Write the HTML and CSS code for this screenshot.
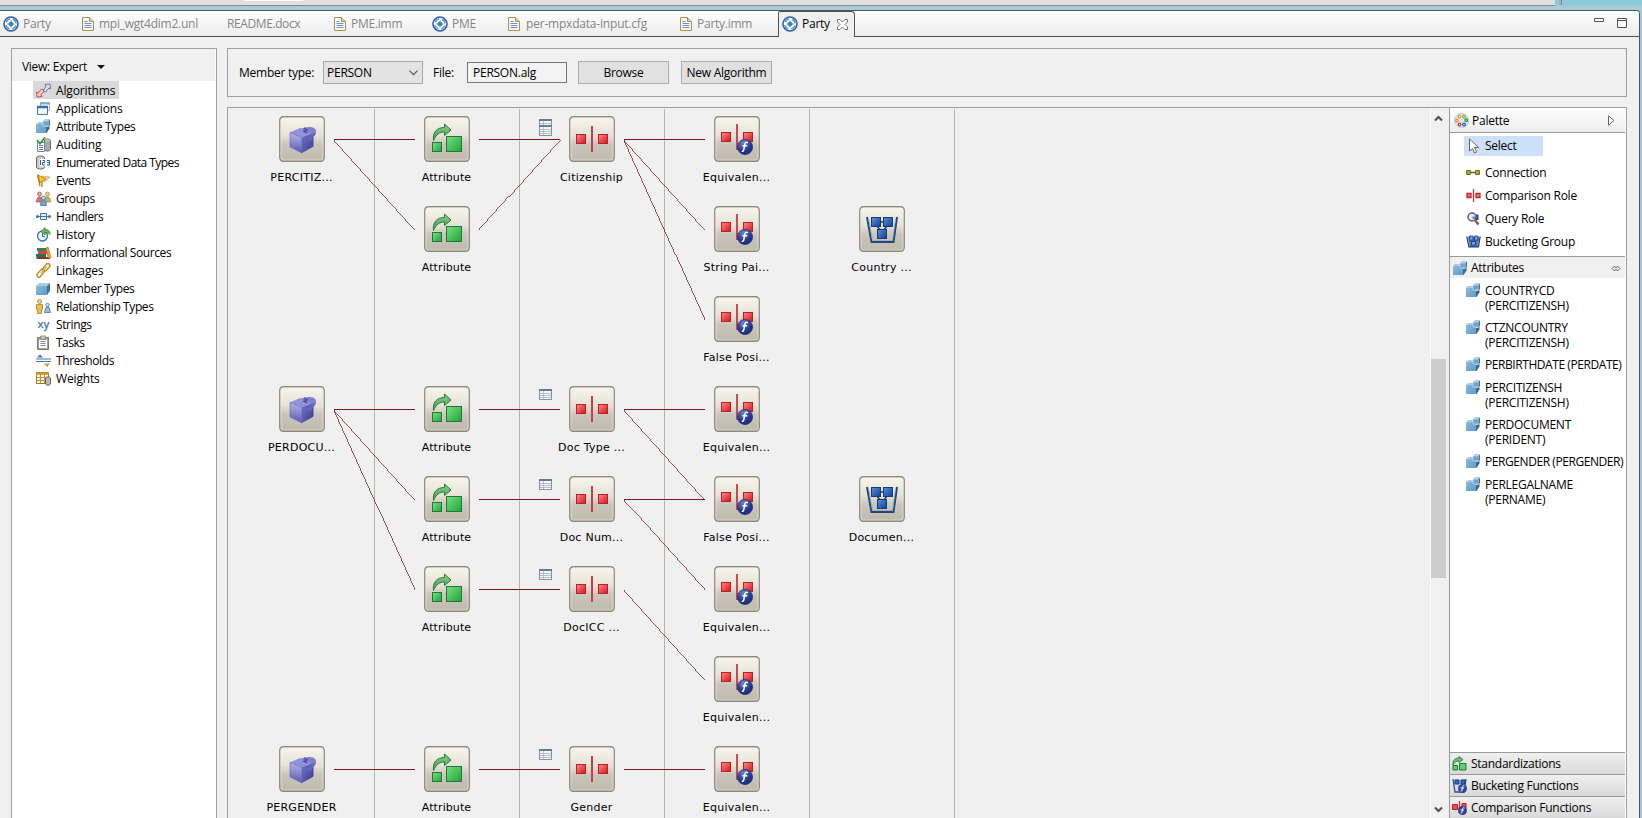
FILE: index.html
```html
<!DOCTYPE html>
<html lang="en">
<head>
<meta charset="utf-8">
<title>Party</title>
<link rel="stylesheet" href="styles.css">
</head>
<body>
<svg class="defs" width="0" height="0">
  <defs>
    <linearGradient id="gTile" x1="0" y1="0" x2="0" y2="1"><stop offset="0" stop-color="#f8f6ec"/><stop offset=".42" stop-color="#e6e2d8"/><stop offset=".62" stop-color="#cbc6bb"/><stop offset="1" stop-color="#bfbaae"/></linearGradient>
    <linearGradient id="gGreen" x1="0" y1="0" x2="1" y2="1"><stop offset="0" stop-color="#7ae082"/><stop offset="1" stop-color="#1fa23c"/></linearGradient>
    <linearGradient id="gArrow" x1="0" y1="0" x2="0" y2="1"><stop offset="0" stop-color="#8ccf90"/><stop offset="1" stop-color="#3b9a4c"/></linearGradient>
    <linearGradient id="gRed" x1="0" y1="0" x2="1" y2="1"><stop offset="0" stop-color="#ff8a8a"/><stop offset="1" stop-color="#d3141c"/></linearGradient>
    <linearGradient id="gBlue" x1="0" y1="0" x2="1" y2="1"><stop offset="0" stop-color="#5c90dc"/><stop offset="1" stop-color="#0c3f94"/></linearGradient>
    <linearGradient id="gCubeL" x1="0" y1="0" x2="0" y2="1"><stop offset="0" stop-color="#b4b7ea"/><stop offset="1" stop-color="#5a58b4"/></linearGradient>
    <linearGradient id="gCubeR" x1="0" y1="0" x2="1" y2="1"><stop offset="0" stop-color="#7273c8"/><stop offset="1" stop-color="#3a3a94"/></linearGradient>
    <radialGradient id="gBall" cx=".4" cy=".25" r=".8"><stop offset="0" stop-color="#7187d0"/><stop offset=".6" stop-color="#28398e"/><stop offset="1" stop-color="#1b2a70"/></radialGradient>
    <linearGradient id="gSide" x1="0" y1="0" x2="1" y2="1"><stop offset="0" stop-color="#8dbadb"/><stop offset="1" stop-color="#5c9cc8"/></linearGradient>
  </defs>
  <symbol id="tile" viewBox="0 0 46 46"><rect x=".75" y=".75" width="44.5" height="44.5" rx="3.5" fill="url(#gTile)" stroke="#8d897f" stroke-width="1.3"/><rect x="2" y="2" width="42" height="42" rx="2.500" fill="none" stroke="#f4f1e6" stroke-opacity=".5"/></symbol>
  <symbol id="member" viewBox="0 0 46 46"><use href="#tile"/>
    <path d="M11 16.500l12 5v15.500l-12-6z" fill="url(#gCubeL)"/><path d="M23 21.500l11.500-5v14L23 37z" fill="url(#gCubeR)"/><path d="M11 16.500l10-4.500 13.500 4.500-11.500 5z" fill="#9294da"/>
    <path d="M27 15c2-1 5 0 5 2 0 3-2 3-3 5v2.500l3 1 1.500-4c2.500-1.500 3.500-3.500 3.500-6z" fill="#6667bc"/>
    <path d="M22 13.500c1.500-1.800 4.500-2.500 8-2.500 4 0 7 1.500 7 4-1 2-3 3-5 2.500-1.500-2-4-1.500-5-2-2 0-3.500-1-5-2z" fill="#7f81d0"/><path d="M25 12l3 2-3 1.500 3.500 1.500" fill="none" stroke="#4243a0" stroke-width="1.200"/><path d="M11 16.500l12 5V37l-12-6zM23 21.500l5-2" fill="none" stroke="#6463b5" stroke-width=".6"/></symbol>
  <symbol id="attrGlyph" viewBox="0 0 46 46"><path d="M9.500 24.500c-1-8 3-13 11-13V8l6.500 6-6.500 5.500V16c-5 0-8.500 2.500-11 8.500z" fill="url(#gArrow)" stroke="#2a7a3c" stroke-linejoin="round"/><rect x="8.500" y="26.500" width="9" height="9" fill="url(#gGreen)" stroke="#1c7a32"/><rect x="22.500" y="20.500" width="15" height="15" fill="url(#gGreen)" stroke="#1c7a32"/></symbol>
  <symbol id="attr" viewBox="0 0 46 46"><use href="#tile"/><use href="#attrGlyph"/></symbol>
  <symbol id="role" viewBox="0 0 46 46"><use href="#tile"/><path d="M23 10v26" stroke="#b8343a" stroke-width="2"/><path d="M23 10v26" stroke="#e2555a" stroke-width=".7"/><rect x="7.500" y="18.500" width="9" height="9" fill="url(#gRed)" stroke="#bf1e24"/><rect x="29.500" y="18.500" width="9" height="9" fill="url(#gRed)" stroke="#bf1e24"/></symbol>
  <symbol id="func" viewBox="0 0 46 46"><use href="#tile"/><path d="M23 8v26" stroke="#c43c42" stroke-width="1.800"/><rect x="7.500" y="16.500" width="9" height="9" fill="url(#gRed)" stroke="#bf1e24"/><rect x="29.500" y="16.500" width="9" height="9" fill="url(#gRed)" stroke="#bf1e24"/><circle cx="31" cy="31" r="7.600" fill="url(#gBall)" stroke="#26357c" stroke-width=".8"/><path d="M34 26.600c-2.400-1-3 .5-3.400 3l-.8 4c-.3 1.600-1 2-2 1.500M28.500 29.700h4.700" fill="none" stroke="#fff" stroke-width="1.500"/></symbol>
  <symbol id="bucket" viewBox="0 0 46 46"><use href="#tile"/><path d="M8 11l4.500 25h22L38 11" fill="none" stroke="#274672" stroke-width="2"/><path d="M9.700 13l3.800 21.500h20l3-21.500" fill="none" stroke="#88aad2" stroke-width=".8"/><path d="M21 16h4M18 20l3 4M28 20l-3 4" stroke="#24375f" stroke-width="1.400"/><rect x="12.500" y="11.500" width="9" height="9" fill="url(#gBlue)" stroke="#173a7c"/><rect x="24.500" y="11.500" width="9" height="9" fill="url(#gBlue)" stroke="#173a7c"/><rect x="18.500" y="23.500" width="9" height="9" fill="url(#gBlue)" stroke="#173a7c"/></symbol>
  <symbol id="table" viewBox="0 0 13 11"><rect x=".5" y=".5" width="12" height="10" fill="#f7f9fc" stroke="#8293a8"/><path d="M0 1h13" stroke="#647b99" stroke-width="2"/><path d="M1 4.500h11M1 6.500h11M1 8.500h11" stroke="#9eafc3" stroke-width=".8"/><path d="M4.500 2v8" stroke="#9eafc3" stroke-width=".7"/></symbol>

  <symbol id="wheel" viewBox="0 0 16 16"><circle cx="8" cy="8" r="7" fill="#fff" stroke="#2b62a0" stroke-width="1.600"/><circle cx="8" cy="8" r="5.200" fill="none" stroke="#5d92c8" stroke-width="1.500" stroke-dasharray="5.170 3" stroke-dashoffset="-1.500"/><circle cx="8" cy="8" r="2.300" fill="#3f7cbc"/><path d="M8 4.500v7M4.500 8h7" stroke="#3f7cbc"/></symbol>
  <symbol id="doc" viewBox="0 0 12 14"><path d="M.5.500h7l4 4v9H.500z" fill="#fbfaf0" stroke="#a0935c"/><path d="M7.500.500v4h4" fill="#e2d28a" stroke="#a0935c"/><path d="M2.500 4.500h3M2.500 6.500h7M2.500 8.500h7M2.500 10.500h7" stroke="#6d92cd"/></symbol>
  <symbol id="cube" viewBox="0 0 15 15"><path d="M0 5l3-3h11l-3 3z" fill="#a9cce4"/><path d="M0 5h11v9H0z" fill="url(#gSide)"/><path d="M11 5l3-3v8l-3 4z" fill="#47709a"/></symbol>
  <symbol id="cubes" viewBox="0 0 15 15"><path d="M0 5l2-2h6v2z" fill="#a9cce4"/><path d="M0 5h10v9H0z" fill="url(#gSide)"/><path d="M10 8l3.500-1v2.500l-3 4.500H10z" fill="#45658d"/><path d="M7 2l2-2h5l-1.500 2z" fill="#a9cce4"/><path d="M7 2h5.500v5H7z" fill="#6da5cd" stroke="#d6e7f3" stroke-width=".6"/><path d="M12.500 2L14 .500V6l-1.500 1.500z" fill="#47709a"/></symbol>
</svg>

<div class="top-strip"><div class="top-grey"><span class="top-white"></span></div><span class="top-mark"></span></div>
<div class="window">
  <div class="tabs">
    <div class="tab t1"><svg width="16" height="16"><use href="#wheel"/></svg><span>Party</span></div>
    <div class="tab t2"><svg width="12" height="14"><use href="#doc"/></svg><span>mpi_wgt4dim2.unl</span></div>
    <div class="tab t3"><span>README.docx</span></div>
    <div class="tab t4"><svg width="12" height="14"><use href="#doc"/></svg><span>PME.imm</span></div>
    <div class="tab t5"><svg width="16" height="16"><use href="#wheel"/></svg><span>PME</span></div>
    <div class="tab t6"><svg width="12" height="14"><use href="#doc"/></svg><span>per-mpxdata-input.cfg</span></div>
    <div class="tab t7"><svg width="12" height="14"><use href="#doc"/></svg><span>Party.imm</span></div>
    <div class="tab active"><svg width="16" height="16"><use href="#wheel"/></svg><span>Party</span><svg class="close" width="11" height="11" viewBox="0 0 11 11"><path d="M.5.500h2.500l2.500 2.500L8 .500h2.500V3L8 5.500 10.500 8v2.500H8L5.500 8 3 10.500H.500V8L3 5.500.500 3z" fill="#fff" stroke="#666" stroke-width=".9"/></svg></div>
    <svg class="winbtn" width="34" height="12" viewBox="0 0 34 12"><path d="M.5 1.500h9v3h-9zM23.500 1.500h9v9h-9zM23.500 3.500h9" fill="#fff" stroke="#555"/></svg>
  </div>

  <div class="body">
    <aside class="side">
      <div class="view"><span>View: Expert</span><i class="caret"></i></div>
      <div class="tree">
        <div class="item sel"><svg viewBox="0 0 15 15"><path d="M1 14l-.5-5L2 10l3.500-4 2.500 1-.5 2L5 11.500l1 2z" fill="#f2c7c7" stroke="#b14848" stroke-width=".9"/><path d="M14 1l.5 5L13 5 9.500 9 7.500 8 8 6l2-2.500-1-2z" fill="#d5dbea" stroke="#5f708d" stroke-width=".9"/></svg><span>Algorithms</span></div>
        <div class="item"><svg viewBox="0 0 15 15"><path d="M4.500 1.500h9v8h-9z" fill="#fff" stroke="#a7b7c7"/><path d="M4 2.500h10" stroke="#8aa7cc" stroke-width="2"/><path d="M1.500 5.500h10v8h-10z" fill="#f3f8fd" stroke="#51749f"/><path d="M1 6h11" stroke="#2f6fbd" stroke-width="2.500"/></svg><span>Applications</span></div>
        <div class="item tight"><svg viewBox="0 0 15 15"><use href="#cubes"/></svg><span>Attribute Types</span></div>
        <div class="item"><svg viewBox="0 0 15 15"><ellipse cx="11.500" cy="3.500" rx="3" ry="1.500" fill="#eee" stroke="#777"/><path d="M8.500 3.500v9c1 2 5 2 6 0v-9" fill="#aaa" stroke="#666"/><path d="M1.500 5.500h7v9h-7z" fill="#fff" stroke="#6b86ad"/><path d="M3 8.500h4M3 10.500h4M3 12.500h4" stroke="#5f83bd"/><path d="M1 3l3 3.500L9 .500" fill="none" stroke="#2f9143" stroke-width="1.800"/></svg><span>Auditing</span></div>
        <div class="item tighter"><svg viewBox="0 0 15 15"><path d="M.5 2.500c1-2 7-2 8 0v10c-1 2-7 2-8 0z" fill="#ccc" stroke="#666"/><path d="M3.500 4h12v7.500h-12z" fill="#fff"/><path d="M4.500 5v5M6.500 5.500h2v2h-2v2.500h2.500M11 5.500h2.500v4.500H11M11 7.700h2" fill="none" stroke="#315b97"/></svg><span>Enumerated Data Types</span></div>
        <div class="item tight"><svg viewBox="0 0 15 15"><path d="M5 3l9 1-5 5z" fill="#e6d5b0" stroke="#b9a077" stroke-width=".7"/><path d="M2 2l8 4-6 4z" fill="#fbc52f" stroke="#c18113" stroke-width=".9"/><path d="M1.500 1.500L4 13M6 8v6" stroke="#b98122" stroke-width="1.300"/></svg><span>Events</span></div>
        <div class="item tight"><svg viewBox="0 0 15 15"><circle cx="3.500" cy="3" r="2" fill="#e7a6a0" stroke="#a54d4d" stroke-width=".7"/><path d="M.5 11c0-7 6-7 6 0z" fill="#d77777" stroke="#a54d4d" stroke-width=".7"/><circle cx="11.500" cy="3" r="2" fill="#e6d58d" stroke="#948035" stroke-width=".7"/><path d="M8.500 11c0-7 6-7 6 0z" fill="#c4b360" stroke="#948035" stroke-width=".7"/><circle cx="7.500" cy="7" r="2" fill="#b9d6ee" stroke="#3a679c" stroke-width=".7"/><path d="M4.500 14.500c0-7 6-7 6 0z" fill="#70a6d5" stroke="#3a679c" stroke-width=".7"/></svg><span>Groups</span></div>
        <div class="item tight"><svg viewBox="0 0 15 15"><path d="M0 7.500h15" stroke="#3e70aa"/><path d="M4.500 4.500h6v6h-6z" fill="#e6f0fa" stroke="#3e70aa"/><path d="M4 7.500h7" stroke="#3e70aa"/><circle cx="1.500" cy="7.500" r="1.500" fill="#3e70aa"/><circle cx="13.500" cy="7.500" r="1.500" fill="#3e70aa"/></svg><span>Handlers</span></div>
        <div class="item"><svg viewBox="0 0 15 15"><circle cx="6.500" cy="9" r="5" fill="#eaf5fd" stroke="#3774ad" stroke-width="1.300"/><path d="M6.500 6v3.500H9" fill="none" stroke="#3774ad"/><path d="M5 4.500L9 .500v2c4 0 5 2 5 5-1-2-3-2-5-2v2.500z" fill="#6dbb46" stroke="#2c792e" stroke-width=".8"/></svg><span>History</span></div>
        <div class="item tight"><svg viewBox="0 0 15 15"><path d="M1 3h9v3H1z" fill="#248571"/><path d="M2 6h9v3H2z" fill="#d84c25"/><path d="M0 9h10v3H0z" fill="#276d64"/><path d="M1 12h13v2H0z" fill="#7c3b22"/><path d="M10 3l2-1 3 11h-3z" fill="#f39a25" stroke="#b75c18" stroke-width=".6"/></svg><span>Informational Sources</span></div>
        <div class="item"><svg viewBox="0 0 15 15"><g fill="#fff7dc" stroke="#b88323" stroke-width="1.300"><rect x="-4" y="-2" width="8.500" height="4" rx="2" transform="translate(10.300 4.500) rotate(-50)"/><rect x="-4.500" y="-2" width="9" height="4" rx="2" transform="translate(4.500 10.300) rotate(-50)"/></g><path d="M5 10l5.500-6" stroke="#e0a93d" stroke-width="1.300"/></svg><span>Linkages</span></div>
        <div class="item tight"><svg viewBox="0 0 15 15"><use href="#cube"/></svg><span>Member Types</span></div>
        <div class="item tight"><svg viewBox="0 0 15 15"><circle cx="3.500" cy="2.500" r="2" fill="#f2d677" stroke="#a77e26" stroke-width=".8"/><path d="M.5 5.500h6v5H5.500v4h-4v-4h-1z" fill="#e9bf4d" stroke="#a77e26" stroke-width=".8"/><circle cx="11.500" cy="6" r="1.700" fill="#d7e4f2" stroke="#4c6f9e" stroke-width=".8"/><path d="M8.500 13.500l1.500-5h3l1.500 5z" fill="#9dbbdd" stroke="#4c6f9e" stroke-width=".8"/></svg><span>Relationship Types</span></div>
        <div class="item tight"><b class="xy">xy</b><span>Strings</span></div>
        <div class="item tighter"><svg viewBox="0 0 15 15"><path d="M1.500 2.500h11v12h-11z" fill="#a9a18f" stroke="#81796a"/><path d="M3 5h8v8H3z" fill="#fff"/><path d="M4.500 1h5v3h-5z" fill="#ccc" stroke="#777" stroke-width=".7"/><path d="M4.500 6.500h5M4.500 8.500h5M4.500 10.500h5" stroke="#6b87be"/></svg><span>Tasks</span></div>
        <div class="item tight"><svg viewBox="0 0 15 15"><path d="M0 6h15M0 8.500h15" stroke="#4473b8" stroke-width="1.200"/><path d="M1 4.500L4 1.500l3 3z" fill="#3c6dae"/><path d="M8 10.500l3 3.500 3-3.500z" fill="#b1a73a"/></svg><span>Thresholds</span></div>
        <div class="item"><svg viewBox="0 0 15 15"><path d="M.5 1.500h12v11H.500z" fill="#fff8df" stroke="#a87421"/><path d="M0 2.500h13" stroke="#d0902a" stroke-width="2.500"/><path d="M1 6.500h11M1 9.500h11M4.500 3v9M8.500 3v9" stroke="#bc9140"/><path d="M9.500 7c1-1.500 4-1.500 5 0v6c-1 1.500-4 1.500-5 0z" fill="#b8b8b8" stroke="#666"/></svg><span>Weights</span></div>
      </div>
    </aside>

    <main class="main">
      <div class="toolbar">
        <span class="lbl lbl-member">Member type:</span>
        <div class="select"><span>PERSON</span><svg width="9" height="6" viewBox="0 0 9 6"><path d="M.5.700l4 4 4-4" fill="none" stroke="#555" stroke-width="1.200"/></svg></div>
        <span class="lbl lbl-file">File:</span>
        <div class="input">PERSON.alg</div>
        <div class="button browse">Browse</div>
        <div class="button new">New Algorithm</div>
      </div>

      <div class="editor">
        <div class="canvas">
          <svg class="edges" width="1203" height="710" viewBox="228 108 1203 710">
            <path d="M374.500 109v709M519.500 109v709M664.500 109v709M809.500 109v709M954.500 109v709" stroke="#b9b5a2"/>
            <g fill="none" stroke="#74191d" shape-rendering="crispEdges">
              <path d="M334 139.500h81M334 409.500h81M334 769.500h81M479 139.500h81M479 409.500h81M479 499.500h81M479 589.500h81M479 769.500h81M624 139.500h81M624 409.500h81M624 499.500h81M624 769.500h81"/>
              <path stroke-width=".75" d="M334 139.500l81 90M334 409.500l81 90M334 409.500l81 180M479 229.500l81-90M624 139.500l81 90M624 139.500l81 180M624 409.500l81 90M624 499.500l81 90M624 589.500l81 90"/>
            </g>
            <use href="#table" x="539" y="119" width="13" height="11"/><use href="#table" x="539" y="125" width="13" height="11"/>
            <use href="#table" x="539" y="389" width="13" height="11"/><use href="#table" x="539" y="479" width="13" height="11"/><use href="#table" x="539" y="569" width="13" height="11"/><use href="#table" x="539" y="749" width="13" height="11"/>
          </svg>
          <div class="nodes">
            <div class="node c1 r1"><svg><use href="#member"/></svg><span>PERCITIZ...</span></div>
            <div class="node c2 r1"><svg><use href="#attr"/></svg><span>Attribute</span></div>
            <div class="node c3 r1"><svg><use href="#role"/></svg><span>Citizenship</span></div>
            <div class="node c4 r1"><svg><use href="#func"/></svg><span>Equivalen...</span></div>
            <div class="node c2 r2"><svg><use href="#attr"/></svg><span>Attribute</span></div>
            <div class="node c4 r2"><svg><use href="#func"/></svg><span>String Pai...</span></div>
            <div class="node c5 r2"><svg><use href="#bucket"/></svg><span>Country ...</span></div>
            <div class="node c4 r3"><svg><use href="#func"/></svg><span>False Posi...</span></div>
            <div class="node c1 r4"><svg><use href="#member"/></svg><span>PERDOCU...</span></div>
            <div class="node c2 r4"><svg><use href="#attr"/></svg><span>Attribute</span></div>
            <div class="node c3 r4"><svg><use href="#role"/></svg><span>Doc Type ...</span></div>
            <div class="node c4 r4"><svg><use href="#func"/></svg><span>Equivalen...</span></div>
            <div class="node c2 r5"><svg><use href="#attr"/></svg><span>Attribute</span></div>
            <div class="node c3 r5"><svg><use href="#role"/></svg><span>Doc Num...</span></div>
            <div class="node c4 r5"><svg><use href="#func"/></svg><span>False Posi...</span></div>
            <div class="node c5 r5"><svg><use href="#bucket"/></svg><span>Documen...</span></div>
            <div class="node c2 r6"><svg><use href="#attr"/></svg><span>Attribute</span></div>
            <div class="node c3 r6"><svg><use href="#role"/></svg><span>DocICC ...</span></div>
            <div class="node c4 r6"><svg><use href="#func"/></svg><span>Equivalen...</span></div>
            <div class="node c4 r7"><svg><use href="#func"/></svg><span>Equivalen...</span></div>
            <div class="node c1 r8"><svg><use href="#member"/></svg><span>PERGENDER</span></div>
            <div class="node c2 r8"><svg><use href="#attr"/></svg><span>Attribute</span></div>
            <div class="node c3 r8"><svg><use href="#role"/></svg><span>Gender</span></div>
            <div class="node c4 r8"><svg><use href="#func"/></svg><span>Equivalen...</span></div>
          </div>
        </div>
        <div class="scroll">
          <svg width="9" height="7" viewBox="0 0 9 7"><path d="M1 5.500L4.500 2 8 5.500" fill="none" stroke="#505050" stroke-width="2"/></svg>
          <div class="thumb"></div>
          <svg class="down" width="9" height="7" viewBox="0 0 9 7"><path d="M1 1.500L4.500 5 8 1.500" fill="none" stroke="#505050" stroke-width="2"/></svg>
        </div>
        <div class="palette">
          <div class="pal-head"><svg width="15" height="15" viewBox="0 0 15 15"><circle cx="7.500" cy="7.500" r="7" fill="#dfe7f6" stroke="#b9c5de"/><g fill="#fff" stroke-width="1.300"><circle cx="5.500" cy="3.500" r="1.300" stroke="#e0a030"/><circle cx="10" cy="3.500" r="1.300" stroke="#8cb52d"/><circle cx="12.200" cy="7.200" r="1.300" stroke="#29912d"/><circle cx="10" cy="11.500" r="1.300" stroke="#2850b8"/><circle cx="5.500" cy="11.500" r="1.300" stroke="#c13b3b"/><circle cx="3" cy="7.500" r="1.300" stroke="#ef8c1c"/></g></svg><span>Palette</span><svg class="tri" width="7" height="11" viewBox="0 0 7 11"><path d="M.5.800v9.400l5.500-4.700z" fill="#fff" stroke="#666"/></svg></div>
          <div class="tools">
            <div class="tool on"><svg width="15" height="16" viewBox="0 0 15 16"><path d="M3.500 1v12l3-2.500 2 4.500 2-1-2-4.500h4z" fill="#fff" stroke="#6b675e"/></svg><span>Select</span></div>
            <div class="tool"><svg width="15" height="15" viewBox="0 0 15 15"><path d="M4 7.500h7" stroke="#66661e" stroke-width="1.500"/><path d="M.5 5.500h4v4h-4zM9.500 5.500h4v4h-4z" fill="#a9a943" stroke="#6f6f26"/></svg><span>Connection</span></div>
            <div class="tool"><svg width="15" height="15" viewBox="0 0 15 15"><path d="M7.500 1v13" stroke="#c8333a" stroke-width="1.300"/><path d="M1 5.500h4v4H1zM10 5.500h4v4h-4z" fill="#f57d7d" stroke="#c02229" stroke-width="1.300"/></svg><span>Comparison Role</span></div>
            <div class="tool"><svg width="15" height="15" viewBox="0 0 15 15"><path d="M8.500 8.500l4 5" stroke="#8d5a50" stroke-width="2.500"/><path d="M7 3.500h5.500v5.500H7z" fill="#38488a"/><circle cx="6" cy="6" r="4" fill="#e4eaf6" stroke="#54608c" stroke-width="1.500"/><path d="M6.500 5.500H9v2.500H6.500z" fill="#6d7cb4"/></svg><span>Query Role</span></div>
            <div class="tool"><svg width="15" height="15" viewBox="5 7 36 32"><path d="M10 12l4 24h19l4-24z" fill="#557ab4"/><path d="M7 11l5 25h23l4-25" fill="none" stroke="#233c72" stroke-width="3"/><path d="M13 10h9v10h-9zM25 10h9v10h-9zM18 23h10v9H18z" fill="#6f9be0" stroke="#173a7c" stroke-width="2"/></svg><span>Bucketing Group</span></div>
          </div>
          <div class="attr-head"><svg width="15" height="15"><use href="#cubes"/></svg><span>Attributes</span><svg class="pin" width="10" height="7" viewBox="0 0 10 7"><path d="M3.500 1L1 3.500 3.500 6M6.500 1L9 3.500 6.500 6M3 1.500q2 2 4 0M3 5.500q2-2 4 0" fill="none" stroke="#666"/></svg></div>
          <div class="attrs">
            <div class="entry"><svg><use href="#cubes"/></svg><span>COUNTRYCD<br>(PERCITIZENSH)</span></div>
            <div class="entry"><svg><use href="#cubes"/></svg><span>CTZNCOUNTRY<br>(PERCITIZENSH)</span></div>
            <div class="entry long"><svg><use href="#cubes"/></svg><span>PERBIRTHDATE (PERDATE)</span></div>
            <div class="entry"><svg><use href="#cubes"/></svg><span>PERCITIZENSH<br>(PERCITIZENSH)</span></div>
            <div class="entry"><svg><use href="#cubes"/></svg><span>PERDOCUMENT<br>(PERIDENT)</span></div>
            <div class="entry long"><svg><use href="#cubes"/></svg><span>PERGENDER (PERGENDER)</span></div>
            <div class="entry"><svg><use href="#cubes"/></svg><span>PERLEGALNAME<br>(PERNAME)</span></div>
          </div>
          <div class="drawer"><svg width="16" height="16" viewBox="0 0 16 16"><path d="M1 9C.5 4 3 2 7 2V.500l4 3-4 3V5C4 5 2.500 6 1 9z" fill="#6fbf77" stroke="#2a7a3c" stroke-width=".9"/><path d="M1 9.500h4.500V14H1zM7.500 7.500H14V14H7.500z" fill="#63d06c" stroke="#1c7a32"/></svg><span>Standardizations</span></div>
          <div class="drawer"><svg width="16" height="16" viewBox="0 0 16 16"><path d="M1 1l2 13h9l2-13" fill="#cfdef4" stroke="#2b4f93" stroke-width="1.300"/><path d="M3 2h4v4H3zM9 2h4v4H9z" fill="#3767b8" stroke="#173a7c"/><circle cx="10.500" cy="10.500" r="4.500" fill="#2f489f"/><path d="M12.500 8c-2-1-2 1-2.300 3s-.5 2.500-1.500 2M8.500 10h3.500" fill="none" stroke="#fff"/></svg><span>Bucketing Functions</span></div>
          <div class="drawer last"><svg width="16" height="16" viewBox="0 0 16 16"><path d="M7.500 1v12" stroke="#c8333a" stroke-width="1.300"/><path d="M.5 4.500h5v5h-5zM10 3.500h4v4h-4z" fill="#ef4c4c" stroke="#b91d24"/><circle cx="10.500" cy="10.500" r="4.500" fill="#2f3f94"/><path d="M12.500 8c-2-1-2 1-2.300 3s-.5 2.500-1.500 2M8.500 10h3.500" fill="none" stroke="#fff"/></svg><span>Comparison Functions</span></div>
        </div>
      </div>
    </main>
  </div>
</div>
</body>
</html>
```
FILE: styles.css
```css
* { box-sizing: border-box; }
html, body { margin: 0; height: 818px; overflow: hidden; }
body {
  width: 1642px;
  background: #9ccbd8;
  color: #000;
  font: 12px/16px "Open Sans", "Noto Sans", sans-serif;
  letter-spacing: -0.25px;
  white-space: nowrap;
  display: flex;
  flex-direction: column;
}
svg { display: block; flex: none; }
.defs { position: absolute; }

.top-strip { height: 10px; flex: none; display: flex; background: linear-gradient(#8ccbd8 0 5px, #a9ccda 6px); }
.top-grey { width: 1555px; height: 6px; background: #e1dfe0; border-bottom: 1px solid #8a8a8c; display: flex; padding-left: 244px; }
.top-white { width: 59px; height: 1px; background: #fff; }
.top-mark { margin-left: 4px; width: 3px; height: 5px; background: #a8aed0; border-right: 1px solid #6e83ab; }

.window { width: 1640px; flex: 1; min-height: 0; display: flex; flex-direction: column; background: #f0f0f0; border: solid #4d5357; border-width: 1px 1px 0 0; border-radius: 0 4px 0 0; }
.tabs { height: 26px; flex: none; display: flex; align-items: center; background: linear-gradient(#fff, #ececec); border-bottom: 1px solid #4d5357; border-radius: 0 3px 0 0; color: #858585; }
.tab { display: flex; align-items: center; height: 26px; gap: 5px; flex: none; }
.t1 { width: 79px; padding-left: 3px; gap: 4px; }
.t2 { width: 148px; padding-left: 3px; }
.t3 { width: 107px; }
.t4 { width: 98px; }
.t5 { width: 76px; gap: 4px; }
.t6 { width: 172px; gap: 6px; }
.t7 { width: 98px; }
.t2 span { letter-spacing: -0.25px; }
.t3 span { letter-spacing: -0.4px; }
.t6 span { letter-spacing: -0.2px; }
.active { width: 77px; margin: -1px 0; padding: 0 0 0 3px; background: #f0f0f0; border: solid #4d5357; border-width: 1px 1px 0; border-radius: 2px 4px 0 0; color: #000; gap: 4px; }
.close { margin-left: 3px; }
.winbtn { margin: 0 11px 2px auto; }

.body { flex: 1; min-height: 0; display: flex; gap: 10px; padding: 11px 12px 0 11px; }
.side { width: 206px; border: 1px solid #a0a0a0; border-bottom: 0; padding-right: 1px; background: #fff; }
.view { height: 32px; background: #f0f0f0; padding: 4px 0 0 10px; display: flex; align-items: center; gap: 10px; letter-spacing: -0.3px; }
.caret { border: 4px solid transparent; border-top-color: #111; border-bottom: 0; }
.tree { padding-left: 21px; }
.item { height: 18px; width: max-content; display: flex; align-items: center; gap: 5px; padding: 0 4px 0 3px; letter-spacing: -0.15px; }
.item svg { width: 15px; height: 15px; }
.item span { padding-top: 1px; }
.tight { letter-spacing: -0.4px; }
.tighter { letter-spacing: -0.53px; }
.sel { background: #d9d9d9; }
.xy { width: 15px; text-align: center; color: #4a74ac; letter-spacing: 0; font-size: 11px; font-weight: 600; }

.main { flex: 1; min-width: 0; display: flex; flex-direction: column; gap: 10px; }
.toolbar { height: 49px; flex: none; border: 1px solid #a0a0a0; display: flex; align-items: center; padding-left: 11px; }
.lbl-member { width: 84px; }
.lbl-file { width: 34px; }
.select { width: 100px; height: 23px; margin-right: 10px; border: 1px solid #a8a8a8; background: #e3e3e3; display: flex; align-items: center; justify-content: space-between; padding: 0 4px 0 3px; }
.input { width: 100px; height: 21px; border: 1px solid #777; padding: 2px 5px 0; background: #f3f3f3; }
.button { width: 91px; height: 23px; margin-left: 11px; border: 1px solid #adadad; background: #e1e1e1; text-align: center; line-height: 22px; }
.new { margin-left: 12px; }

.editor { flex: 1; min-height: 0; border: 1px solid #a0a0a0; border-bottom: 0; display: flex; }
.canvas { width: 1202px; position: relative; overflow: hidden; flex: none; }
.edges { position: absolute; left: 0; top: 0; }
.nodes { position: relative; padding: 8px 0 0 1.5px; display: grid; grid-template-columns: repeat(5, 145px); grid-template-rows: repeat(8, 90px); }
.node { display: flex; flex-direction: column; align-items: center; font: 11px/14px "DejaVu Sans", sans-serif; letter-spacing: 0.25px; }
.node svg { width: 46px; height: 46px; margin-bottom: 9px; }
.node span { margin-right: 1px; }
.c1 { grid-column: 1; } .c2 { grid-column: 2; } .c3 { grid-column: 3; } .c4 { grid-column: 4; } .c5 { grid-column: 5; }
.r1 { grid-row: 1; } .r2 { grid-row: 2; } .r3 { grid-row: 3; } .r4 { grid-row: 4; } .r5 { grid-row: 5; } .r6 { grid-row: 6; } .r7 { grid-row: 7; } .r8 { grid-row: 8; }
.c2 span { letter-spacing: 0.1px; }

.scroll { width: 16px; background: #f1f1f1; border-left: 1px solid #fff; display: flex; flex-direction: column; align-items: center; padding: 7px 0 5px; }
.thumb { width: 15px; height: 219px; margin-top: 237px; background: #cdcdcd; }
.down { margin-top: auto; }

.palette { width: 178px; margin-left: 3px; border-left: 1px solid #999; border-right: 1px solid #fff; background: #fff; display: flex; flex-direction: column; }
.pal-head { height: 25px; flex: none; display: flex; align-items: center; gap: 3px; padding: 1px 10px 0 4px; background: linear-gradient(#fff, #ededed); border-bottom: 1px solid #999; }
.tri { margin-left: auto; }
.tools { height: 124px; flex: none; padding: 3px 0 0 14px; border-bottom: 1px solid #999; }
.tool { height: 23px; display: flex; align-items: center; gap: 4px; padding-left: 2px; letter-spacing: -0.25px; }
.on { width: 79px; height: 20px; margin-bottom: 5px; background: #cce0f8; border-radius: 1px; }
.attr-head { height: 21px; flex: none; background: #f0f0f0; display: flex; align-items: center; gap: 3px; padding: 1px 4px 0 3px; }
.pin { margin-left: auto; }
.attrs { flex: 1; display: flex; flex-direction: column; gap: 7px; padding: 5px 0 0 16px; line-height: 15px; letter-spacing: -0.25px; }
.entry { display: flex; gap: 4px; min-height: 16px; }
.entry svg { width: 15px; height: 15px; }
.long { letter-spacing: -0.43px; }
.drawer { height: 22px; flex: none; display: flex; align-items: center; gap: 3px; padding-left: 2px; background: linear-gradient(#f0f0f0, #d9d9d9); border-top: 1px solid #999; letter-spacing: -0.27px; }
```
